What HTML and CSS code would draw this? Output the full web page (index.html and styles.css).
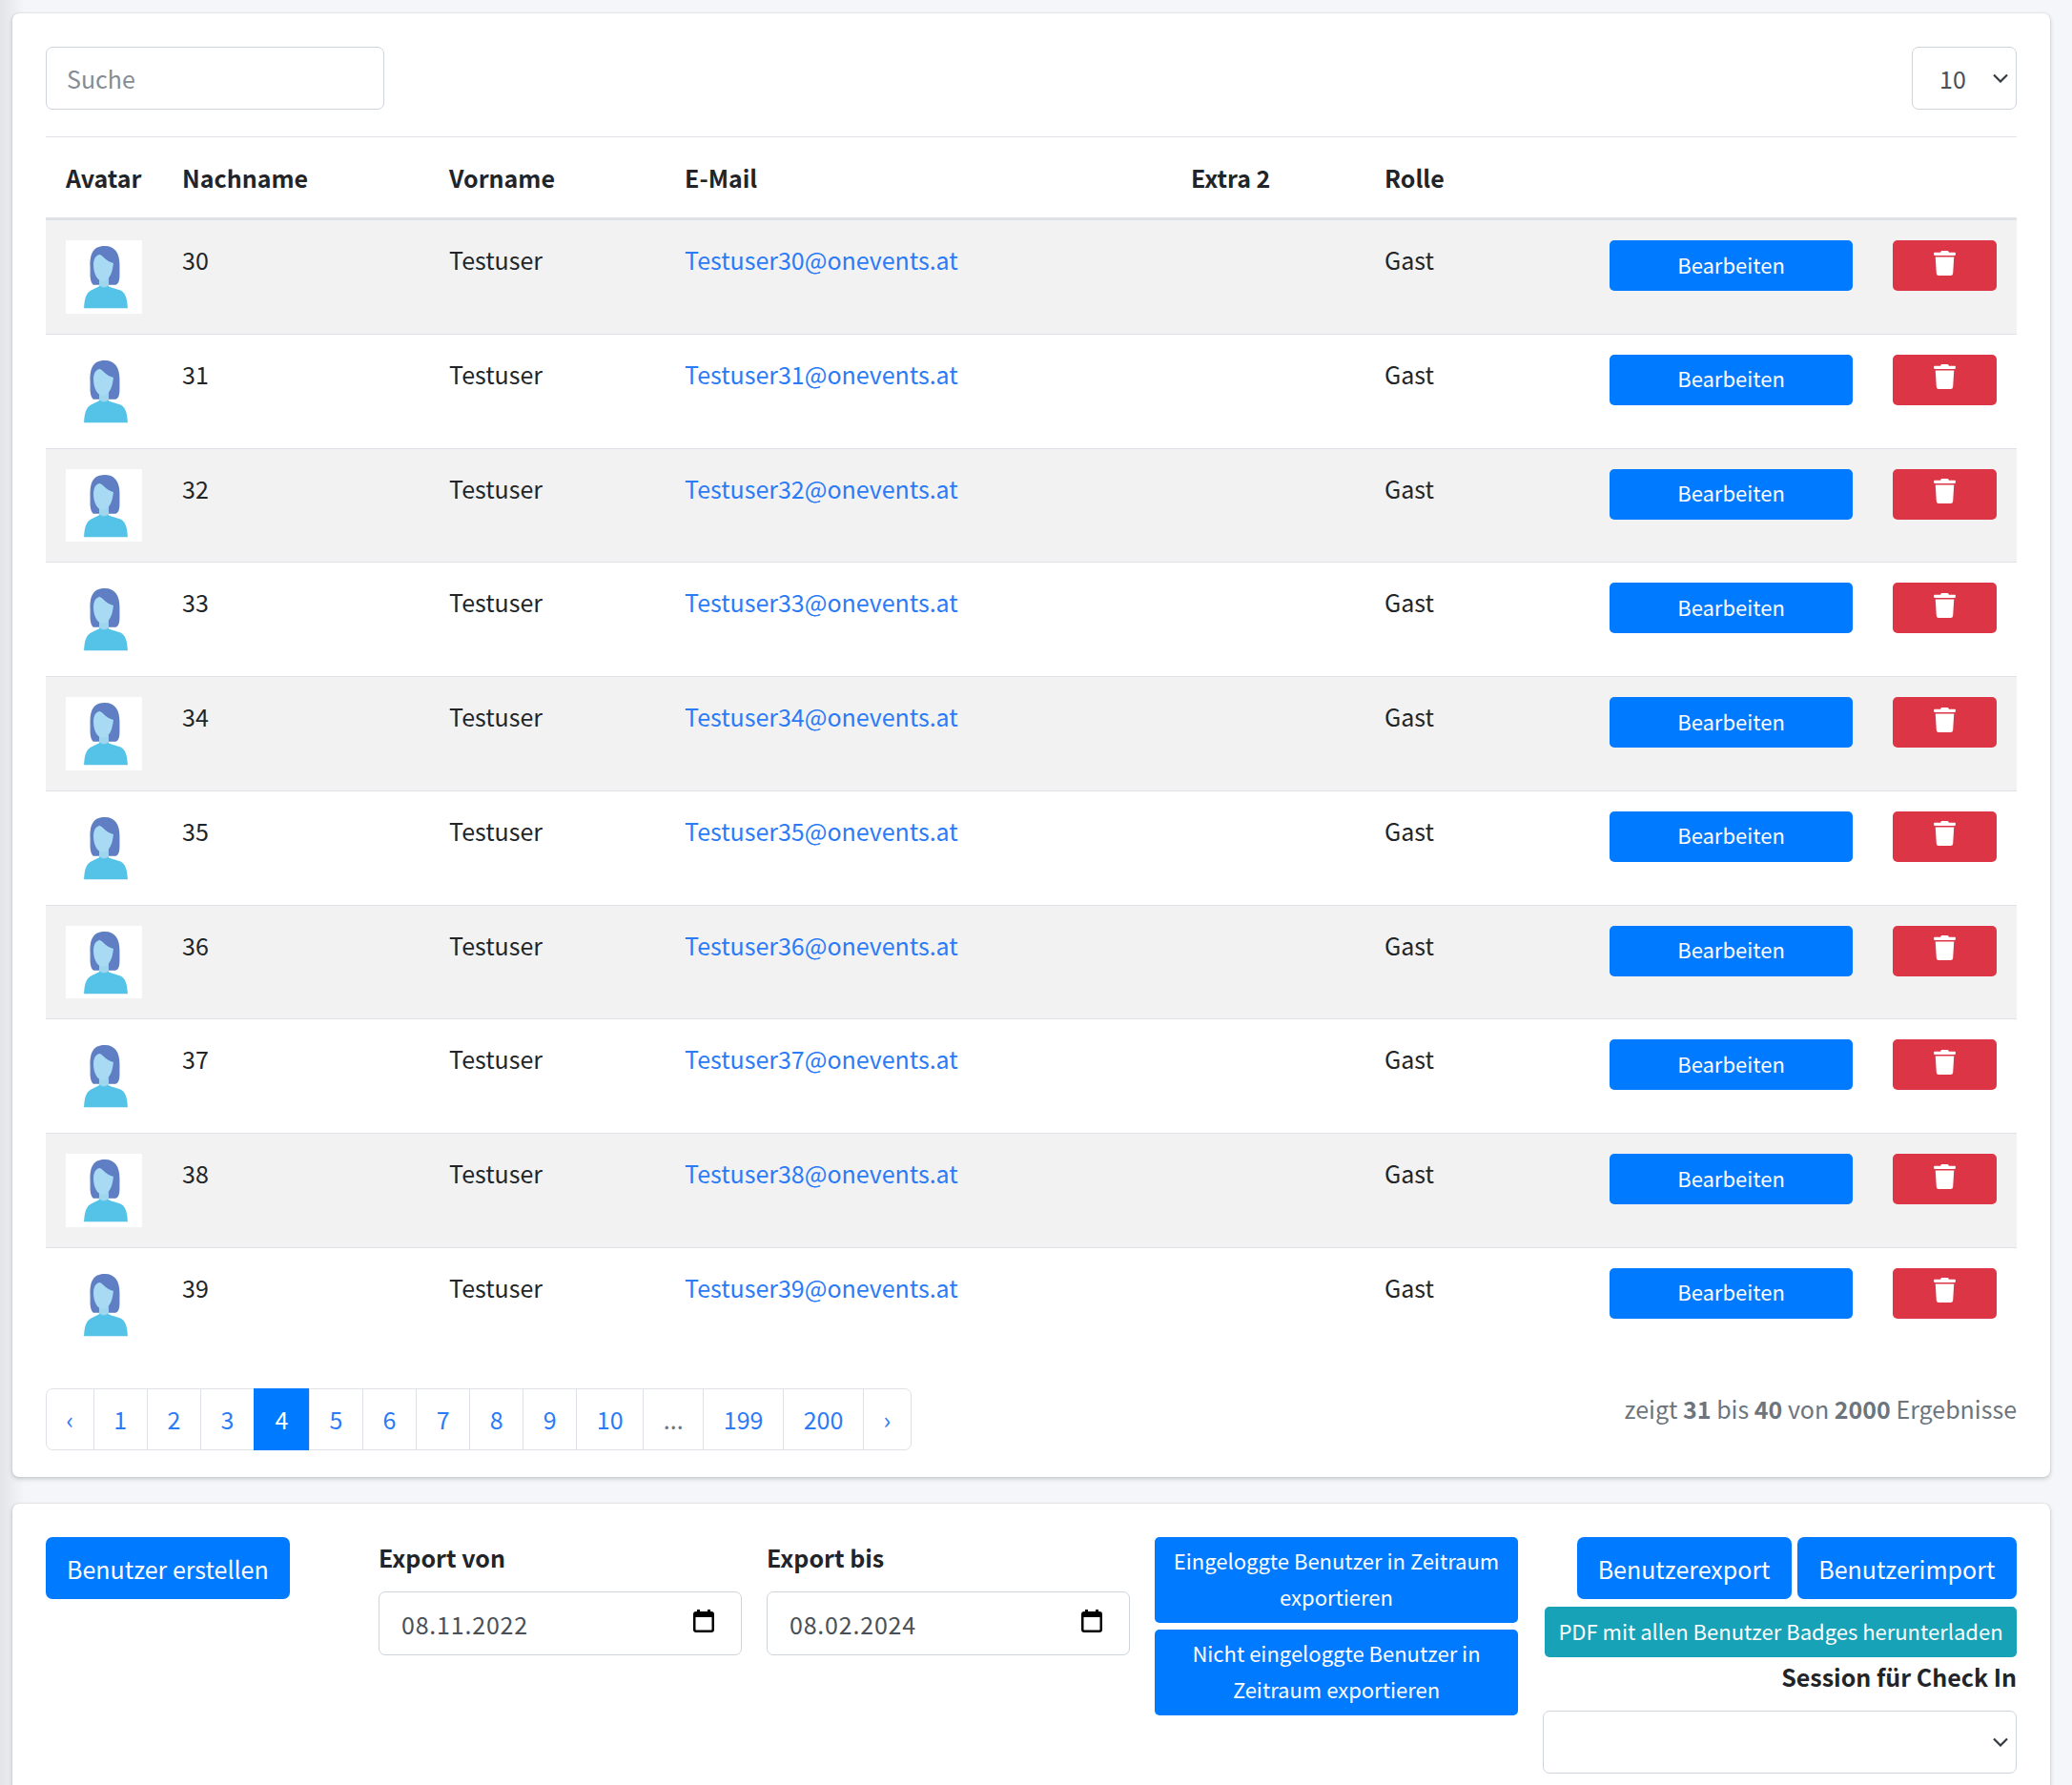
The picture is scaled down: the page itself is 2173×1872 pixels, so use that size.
FILE: index.html
```html
<!DOCTYPE html>
<html lang="de">
<head>
<meta charset="utf-8">
<title>Benutzer</title>
<link rel="stylesheet" href="styles.css">
</head>
<body>
<svg class="defs" aria-hidden="true">
  <symbol id="avatar" viewBox="0 0 80 77">
    <path fill="#5f7ec3" d="M25.500 28C25 12 30 6 41 6C52 6 56.500 14 56.500 26V36C56.500 42 55.500 47 51 47H30C27 47 25.500 41 25.500 36Z"/>
    <path fill="#9dd6ee" d="M35 40H45V50H35Z"/>
    <path fill="#a8dbf3" d="M29 26C29 19 32 15 36 15C40 17 42 22 50 24C49 32 47 42 39 43C33 43 29 35 29 26Z"/>
    <path fill="#55c3e8" d="M19 71.500C19.500 62 21 56 26 53C29 51 33 50 36 48C38 50 42 50 44 48C47 50 53 51 58 53C63 56 64.500 62 65 71.500Z"/>
  </symbol>
  <symbol id="trash" viewBox="0 0 448 512">
    <path fill="currentColor" d="M432 32H312l-9.400-18.700A24 24 0 0 0 281.100 0H166.800a23.720 23.720 0 0 0-21.400 13.300L136 32H16A16 16 0 0 0 0 48v32a16 16 0 0 0 16 16h416a16 16 0 0 0 16-16V48a16 16 0 0 0-16-16zM53.200 467a48 48 0 0 0 47.900 45h245.800a48 48 0 0 0 47.900-45L416 128H32z"/>
  </symbol>
  <symbol id="cal" viewBox="0 0 22 24">
    <path fill="#000" d="M4 0h3v2h8V0h3v2h1a3 3 0 0 1 3 3v16a3 3 0 0 1-3 3H3a3 3 0 0 1-3-3V5a3 3 0 0 1 3-3h1ZM2.500 8v13c0 .300.200.500.500.500h16c.300 0 .500-.200.500-.500V8Z"/>
  </symbol>
</svg>
<main class="page">
  <section class="card card-list">
    <div class="toolbar">
      <input class="field search" type="text" placeholder="Suche">
      <select class="field size"><option>10</option></select>
    </div>
    <table class="users">
      <thead>
        <tr>
          <th class="c-avatar">Avatar</th><th class="c-last">Nachname</th><th class="c-first">Vorname</th><th class="c-mail">E-Mail</th><th class="c-extra">Extra 2</th><th class="c-role">Rolle</th><th class="c-edit"></th><th class="c-del"></th>
        </tr>
      </thead>
      <tbody>
        <tr><td><svg class="avatar"><use href="#avatar"/></svg></td><td>30</td><td>Testuser</td><td><a href="#">Testuser30@onevents.at</a></td><td></td><td>Gast</td><td><button class="btn btn-blue btn-sm">Bearbeiten</button></td><td><button class="btn btn-red btn-sm"><svg class="trash"><use href="#trash"/></svg></button></td></tr>
        <tr><td><svg class="avatar"><use href="#avatar"/></svg></td><td>31</td><td>Testuser</td><td><a href="#">Testuser31@onevents.at</a></td><td></td><td>Gast</td><td><button class="btn btn-blue btn-sm">Bearbeiten</button></td><td><button class="btn btn-red btn-sm"><svg class="trash"><use href="#trash"/></svg></button></td></tr>
        <tr><td><svg class="avatar"><use href="#avatar"/></svg></td><td>32</td><td>Testuser</td><td><a href="#">Testuser32@onevents.at</a></td><td></td><td>Gast</td><td><button class="btn btn-blue btn-sm">Bearbeiten</button></td><td><button class="btn btn-red btn-sm"><svg class="trash"><use href="#trash"/></svg></button></td></tr>
        <tr><td><svg class="avatar"><use href="#avatar"/></svg></td><td>33</td><td>Testuser</td><td><a href="#">Testuser33@onevents.at</a></td><td></td><td>Gast</td><td><button class="btn btn-blue btn-sm">Bearbeiten</button></td><td><button class="btn btn-red btn-sm"><svg class="trash"><use href="#trash"/></svg></button></td></tr>
        <tr><td><svg class="avatar"><use href="#avatar"/></svg></td><td>34</td><td>Testuser</td><td><a href="#">Testuser34@onevents.at</a></td><td></td><td>Gast</td><td><button class="btn btn-blue btn-sm">Bearbeiten</button></td><td><button class="btn btn-red btn-sm"><svg class="trash"><use href="#trash"/></svg></button></td></tr>
        <tr><td><svg class="avatar"><use href="#avatar"/></svg></td><td>35</td><td>Testuser</td><td><a href="#">Testuser35@onevents.at</a></td><td></td><td>Gast</td><td><button class="btn btn-blue btn-sm">Bearbeiten</button></td><td><button class="btn btn-red btn-sm"><svg class="trash"><use href="#trash"/></svg></button></td></tr>
        <tr><td><svg class="avatar"><use href="#avatar"/></svg></td><td>36</td><td>Testuser</td><td><a href="#">Testuser36@onevents.at</a></td><td></td><td>Gast</td><td><button class="btn btn-blue btn-sm">Bearbeiten</button></td><td><button class="btn btn-red btn-sm"><svg class="trash"><use href="#trash"/></svg></button></td></tr>
        <tr><td><svg class="avatar"><use href="#avatar"/></svg></td><td>37</td><td>Testuser</td><td><a href="#">Testuser37@onevents.at</a></td><td></td><td>Gast</td><td><button class="btn btn-blue btn-sm">Bearbeiten</button></td><td><button class="btn btn-red btn-sm"><svg class="trash"><use href="#trash"/></svg></button></td></tr>
        <tr><td><svg class="avatar"><use href="#avatar"/></svg></td><td>38</td><td>Testuser</td><td><a href="#">Testuser38@onevents.at</a></td><td></td><td>Gast</td><td><button class="btn btn-blue btn-sm">Bearbeiten</button></td><td><button class="btn btn-red btn-sm"><svg class="trash"><use href="#trash"/></svg></button></td></tr>
        <tr><td><svg class="avatar"><use href="#avatar"/></svg></td><td>39</td><td>Testuser</td><td><a href="#">Testuser39@onevents.at</a></td><td></td><td>Gast</td><td><button class="btn btn-blue btn-sm">Bearbeiten</button></td><td><button class="btn btn-red btn-sm"><svg class="trash"><use href="#trash"/></svg></button></td></tr>
      </tbody>
    </table>
    <div class="pager-row">
      <nav class="pager">
        <a class="pg pg-arrow" href="#">‹</a><a class="pg" href="#">1</a><a class="pg" href="#">2</a><a class="pg" href="#">3</a><a class="pg active" href="#">4</a><a class="pg" href="#">5</a><a class="pg" href="#">6</a><a class="pg" href="#">7</a><a class="pg" href="#">8</a><a class="pg" href="#">9</a><a class="pg" href="#">10</a><span class="pg pg-dots">...</span><a class="pg" href="#">199</a><a class="pg" href="#">200</a><a class="pg pg-arrow" href="#">›</a>
      </nav>
      <p class="summary">zeigt <b>31</b> bis <b>40</b> von <b>2000</b> Ergebnisse</p>
    </div>
  </section>
  <section class="card card-actions">
    <div class="col">
      <button class="btn btn-blue btn-lg">Benutzer erstellen</button>
    </div>
    <div class="col">
      <label class="label">Export von</label>
      <div class="field date"><span>08.11.2022</span><svg class="cal"><use href="#cal"/></svg></div>
    </div>
    <div class="col">
      <label class="label">Export bis</label>
      <div class="field date"><span>08.02.2024</span><svg class="cal"><use href="#cal"/></svg></div>
    </div>
    <div class="col stack">
      <button class="btn btn-blue btn-wrap">Eingeloggte Benutzer in Zeitraum exportieren</button>
      <button class="btn btn-blue btn-wrap">Nicht eingeloggte Benutzer in Zeitraum exportieren</button>
    </div>
    <div class="col right">
      <div class="btn-row">
        <button class="btn btn-blue btn-lg btn-export">Benutzerexport</button>
        <button class="btn btn-blue btn-lg btn-import">Benutzerimport</button>
      </div>
      <button class="btn btn-teal btn-sm btn-pdf">PDF mit allen Benutzer Badges herunterladen</button>
      <label class="label label-right">Session für Check In</label>
      <select class="field session"><option></option></select>
    </div>
  </section>
</main>
</body>
</html>
```
FILE: styles.css
```css
* { box-sizing: border-box; }
html { overflow: hidden; height: 100%; }
body {
  margin: 0;
  height: 100%;
  overflow: hidden;
  background: linear-gradient(to right, #e2e4e7, #f4f6f9 26px);
  color: #212529;
  font-family: "Noto Sans CJK JP", "Noto Sans", sans-serif;
  font-size: 25px;
  line-height: 42px;
}
.defs { display: none; }
.page { padding: 14px 23px 0 13px; display: flex; flex-direction: column; gap: 28px; }
.card {
  background: #fff;
  border-radius: 7px;
  box-shadow: 0 0 2px rgba(0,0,0,.14), 0 2px 5px rgba(0,0,0,.18);
  padding: 35px 35px 28px 35px;
}
.field {
  height: 66px;
  background: #fff;
  border: 1px solid #ced4da;
  border-radius: 7px;
  color: #495057;
  font: inherit;
  outline: none;
}
.toolbar { display: flex; justify-content: space-between; margin-bottom: 28px; }
.search { width: 355px; padding: 0 21px; }
.search::placeholder { color: #858c93; opacity: 1; }
select.field {
  appearance: none;
  -webkit-appearance: none;
  background-image: url("data:image/svg+xml,%3Csvg xmlns='http://www.w3.org/2000/svg' width='16' height='10' viewBox='0 0 16 10'%3E%3Cpath fill='none' stroke='%23343a40' stroke-width='2.200' d='M1 1.500l7 7 7-7'/%3E%3C/svg%3E");
  background-repeat: no-repeat;
  background-position: right 8px center;
}
.size { width: 110px; padding: 0 0 0 28px; }
.users { width: 100%; border-collapse: collapse; table-layout: fixed; }
.c-avatar { width: 122px; }
.c-last { width: 280px; }
.c-first { width: 247px; }
.c-mail { width: 531px; }
.c-extra { width: 203px; }
.c-role { width: 236px; }
.c-edit { width: 297px; }
.c-del { width: 151px; }
.users th, .users td { padding: 21px; text-align: left; vertical-align: top; }
.users th { font-weight: 700; border-top: 1px solid #dee2e6; border-bottom: 3px solid #dee2e6; }
.users td { border-top: 1px solid #dee2e6; line-height: 41px; }
.users tbody tr:nth-child(odd) { background: #f2f2f2; }
.users a { color: #2b7bf6; text-decoration: none; }
.avatar { display: block; width: 80px; height: 76.750px; background: #fff; }
.btn {
  display: block;
  border: 0;
  border-radius: 5px;
  color: #fff;
  font: inherit;
  cursor: pointer;
  text-align: center;
}
.btn-sm { width: 100%; height: 53px; padding: 0 0 4px; font-size: 22px; line-height: 42px; }
.btn-lg { height: 65px; padding: 0 22px; border-radius: 7px; }
.btn-wrap { width: 100%; padding: 6px 14px 9px; font-size: 22px; line-height: 37.500px; }
.btn-blue { background: #007bff; }
.btn-red { background: #dc3545; }
.btn-teal { background: #17a2b8; }
.trash { display: block; width: 23px; height: 26px; margin: 0 auto; position: relative; top: -1px; color: #fff; }
.pager-row { display: flex; justify-content: space-between; margin-top: 28.500px; }
.pager { display: flex; height: 65px; }
.pg {
  display: block;
  padding: 10px 20.600px;
  margin-left: -1px;
  background: #fff;
  border: 1px solid #dee2e6;
  color: #2b7bf6;
  text-decoration: none;
}
.pg:first-child { margin-left: 0; border-radius: 7px 0 0 7px; }
.pg:last-child { border-radius: 0 7px 7px 0; }
.pg.active { background: #007bff; border-color: #007bff; color: #fff; padding: 10px 21.500px; }
.pg-dots { color: #6c757d; }
.summary { margin: 0; color: #6c757d; }
.card-actions {
  display: grid;
  grid-template-columns: 323px 381px 381px 381px 1fr;
  gap: 26px;
  align-items: start;
  padding-bottom: 35px;
}
.label { display: block; font-weight: 700; margin: 0 0 15px; }
.date { display: flex; align-items: center; justify-content: space-between; height: 67px; padding: 0 28px 0 23px; letter-spacing: .8px; }
.cal { display: block; width: 22px; height: 24px; position: relative; top: -3px; }
.stack { display: flex; flex-direction: column; gap: 7px; }
.right { display: flex; flex-direction: column; align-items: flex-end; }
.btn-row { display: flex; justify-content: flex-end; gap: 6px; }
.btn-import { padding: 0 22.700px; }
.btn-pdf { width: 495px; margin-top: 8px; }
.label-right { margin: -1px 0 15px; }
.session { width: 100%; height: 66px; }
```
